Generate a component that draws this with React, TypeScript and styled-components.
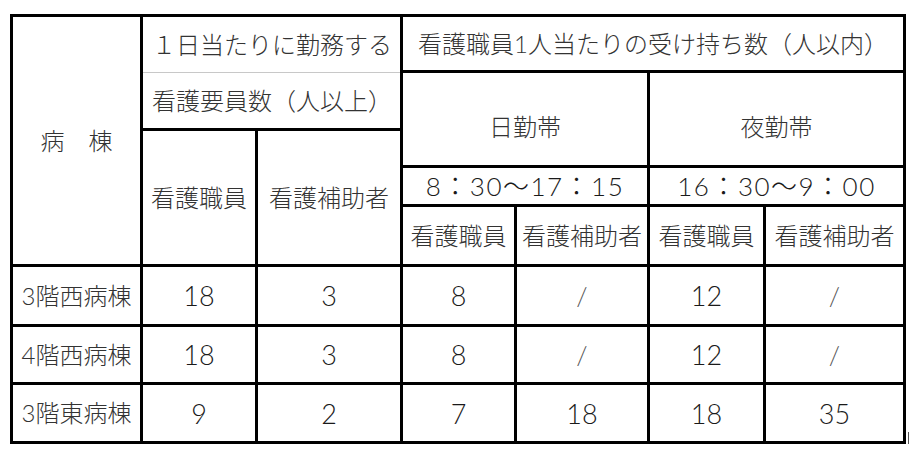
import styled, { createGlobalStyle } from "styled-components";

const GlobalStyle = createGlobalStyle`
    html, body {
        margin: 0;
        padding: 0;
        background: #fff;
    }
    body {
        font-family: Lato, "Noto Sans CJK JP", sans-serif;
        font-weight: 300;
        color: #333;
        -webkit-font-smoothing: antialiased;
    }
`;

const Page = styled.div`
    display: flex;
    align-items: flex-end;
    padding: 14px 0 0 10px;
`;

const Table = styled.div`
    display: grid;
    grid-template-columns: 127px 112px 142px 111px 130px 113px 137px;
    grid-template-rows: 53px 55px 34px 36px 57px 57px 55px 56px;
    gap: 3px;
    padding: 3px;
    background: #000;
`;

const Cell = styled.div<{ $col: string; $row: string; $shift?: number }>`
    grid-column: ${(p) => p.$col};
    grid-row: ${(p) => p.$row};
    background: #fff;
    display: flex;
    align-items: center;
    justify-content: center;
    padding-top: ${(p) => p.$shift ?? 0}px;
    font-size: 24px;
    line-height: 1;
    white-space: nowrap;
`;

const SplitCell = styled.div`
    grid-column: 2 / span 2;
    grid-row: 1 / span 2;
    background: #fff;
    display: flex;
    flex-direction: column;
`;

const SplitPart = styled.div<{ $top?: boolean }>`
    flex: 1;
    display: flex;
    align-items: center;
    padding-left: 9px;
    font-size: 24px;
    line-height: 1;
    white-space: nowrap;
    border-bottom: ${(p) => (p.$top ? "1px solid #c8c8c8" : "none")};
`;

const Num = styled.span`
    font-size: 27px;
    color: #1a1a1a;
`;

const Time = styled.span`
    font-size: 26px;
    letter-spacing: 1.5px;
    color: #1a1a1a;
`;

const Slash = styled.span`
    font-weight: 300;
    color: #555;
    font-size: 26px;
`;

const Mark = styled.div`
    display: flex;
    align-items: flex-end;
    margin-left: 2px;
    margin-bottom: -8px;
    color: #999;
    font-size: 7px;
    line-height: 1;
`;

const Caret = styled.span`
    display: block;
    width: 1px;
    height: 20px;
    background: #555;
`;

const rows = [
    { name: "3階西病棟", values: ["18", "3", "8", "/", "12", "/"] },
    { name: "4階西病棟", values: ["18", "3", "8", "/", "12", "/"] },
    { name: "3階東病棟", values: ["9", "2", "7", "18", "18", "35"] },
];

export default function App() {
    return (
        <>
            <GlobalStyle />
            <Page>
                <Table>
                    <Cell $col="1" $row="1 / span 5">病　棟</Cell>
                    <SplitCell>
                        <SplitPart $top>１日当たりに勤務する</SplitPart>
                        <SplitPart>看護要員数（人以上）</SplitPart>
                    </SplitCell>
                    <Cell $col="4 / span 4" $row="1">看護職員1人当たりの受け持ち数（人以内）</Cell>
                    <Cell $col="2" $row="3 / span 3">看護職員</Cell>
                    <Cell $col="3" $row="3 / span 3">看護補助者</Cell>
                    <Cell $col="4 / span 2" $row="2 / span 2" $shift={16}>日勤帯</Cell>
                    <Cell $col="6 / span 2" $row="2 / span 2" $shift={16}>夜勤帯</Cell>
                    <Cell $col="4 / span 2" $row="4"><Time>8：30～17：15</Time></Cell>
                    <Cell $col="6 / span 2" $row="4"><Time>16：30～9：00</Time></Cell>
                    <Cell $col="4" $row="5">看護職員</Cell>
                    <Cell $col="5" $row="5">看護補助者</Cell>
                    <Cell $col="6" $row="5">看護職員</Cell>
                    <Cell $col="7" $row="5">看護補助者</Cell>
                    {rows.map((r, i) => [
                        <Cell key={`n${i}`} $col="1" $row={`${6 + i}`}>{r.name}</Cell>,
                        ...r.values.map((v, j) => (
                            <Cell key={`v${i}-${j}`} $col={`${2 + j}`} $row={`${6 + i}`}>
                                {v === "/" ? <Slash>/</Slash> : <Num>{v}</Num>}
                            </Cell>
                        )),
                    ])}
                </Table>
                <Mark>
                    <Caret />
                    ↵
                </Mark>
            </Page>
        </>
    );
}
